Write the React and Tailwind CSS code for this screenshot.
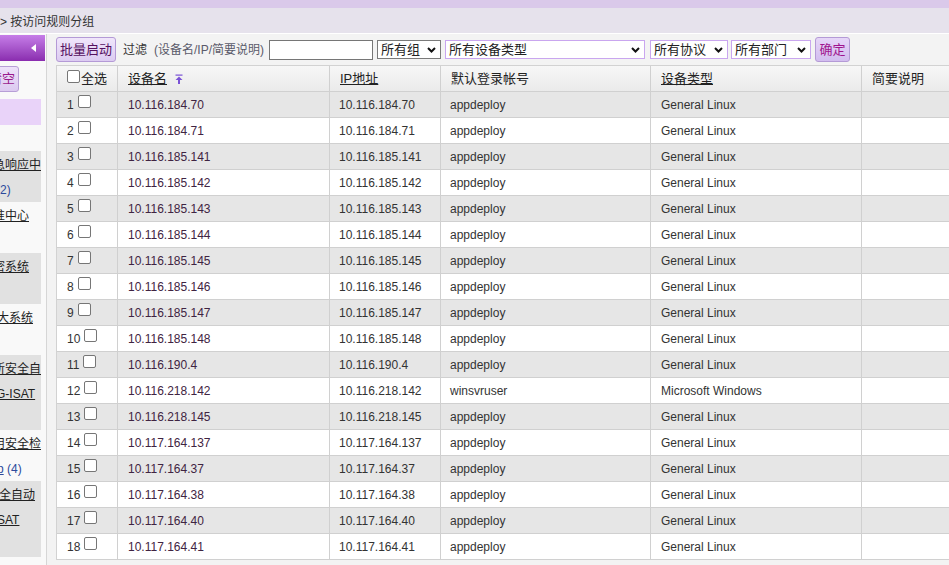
import React from "react";

const rows = [
  ["10.116.184.70", "appdeploy", "General Linux"],
  ["10.116.184.71", "appdeploy", "General Linux"],
  ["10.116.185.141", "appdeploy", "General Linux"],
  ["10.116.185.142", "appdeploy", "General Linux"],
  ["10.116.185.143", "appdeploy", "General Linux"],
  ["10.116.185.144", "appdeploy", "General Linux"],
  ["10.116.185.145", "appdeploy", "General Linux"],
  ["10.116.185.146", "appdeploy", "General Linux"],
  ["10.116.185.147", "appdeploy", "General Linux"],
  ["10.116.185.148", "appdeploy", "General Linux"],
  ["10.116.190.4", "appdeploy", "General Linux"],
  ["10.116.218.142", "winsvruser", "Microsoft Windows"],
  ["10.116.218.145", "appdeploy", "General Linux"],
  ["10.117.164.137", "appdeploy", "General Linux"],
  ["10.117.164.37", "appdeploy", "General Linux"],
  ["10.117.164.38", "appdeploy", "General Linux"],
  ["10.117.164.40", "appdeploy", "General Linux"],
  ["10.117.164.41", "appdeploy", "General Linux"],
];

function Chevron() {
  return (
    <svg width="9" height="6" viewBox="0 0 9 6" className="shrink-0">
      <path d="M1 1 L4.5 4.5 L8 1" fill="none" stroke="#111" strokeWidth="2" />
    </svg>
  );
}

function Sel({ w, purple, children }) {
  return (
    <div
      className={
        "h-[19px] flex items-center justify-between pl-[3px] pr-[4px] bg-white border text-[13px] text-[#222] " +
        w +
        " " +
        (purple ? "border-[#c9a6ef]" : "border-[#7a7a7a]")
      }
    >
      <span className="leading-[17px]">{children}</span>
      <Chevron />
    </div>
  );
}

function Box({ className = "" }) {
  return (
    <span
      className={
        "inline-block w-[13px] h-[13px] shrink-0 bg-white border border-[#767676] rounded-[2px] " +
        className
      }
    />
  );
}

function SideLine({ ml, children, plain }) {
  return (
    <div className="h-[25px] leading-[29px] whitespace-nowrap" style={{ marginLeft: ml }}>
      {plain ? children : <span className="underline">{children}</span>}
    </div>
  );
}

export default function App() {
  return (
    <div className="w-[949px] h-[565px] overflow-hidden bg-[#f3f3f3] text-[12px] text-[#333] font-['Liberation_Sans','Noto_Sans_CJK_SC',sans-serif]">
      <div className="h-[8px] bg-[#dac9ea]" />
      <div className="h-[26px] bg-[#e6e2ec] border-b border-white leading-[29px] text-[12px] text-[#333] whitespace-nowrap">
        &gt; 按访问规则分组
      </div>
      <div className="flex h-[531px]">
        {/* Sidebar */}
        <div className="w-[47px] shrink-0 bg-[#f9f9f9] border-r border-[#d6d6d6] overflow-hidden pt-[1px]">
          <div className="h-[26px] w-[45px] bg-gradient-to-b from-[#c67de8] to-[#8a2caf] flex items-center justify-end pr-[9px]">
            <svg width="5" height="8" viewBox="0 0 5 8">
              <path d="M5 0 L0 4 L5 8 Z" fill="#fff" />
            </svg>
          </div>
          <div className="mt-[5px] h-[26px] w-[19px] overflow-hidden">
            <div className="ml-[-21px] w-[40px] h-[26px] flex items-center justify-end pr-[3px] border border-[#b79fd6] rounded-[3px] bg-gradient-to-b from-[#eee2fa] to-[#dccaf0] text-[13px] text-[#9a1a8c]">
              清空
            </div>
          </div>
          <div className="mt-[7px] h-[26px] w-[41px] bg-[#e9d3f9]" />
          <div className="mt-[26px] w-[41px] overflow-hidden text-[12px] text-[#222]">
            <div className="h-[51px] bg-[#e1e1e1]">
              <SideLine ml="-7px">急响应中</SideLine>
              <SideLine ml="-4px" plain>
                <span className="text-[#2c4a9c]">(2)</span>
              </SideLine>
            </div>
            <div className="h-[51px]">
              <SideLine ml="-7px">准中心</SideLine>
            </div>
            <div className="h-[51px] bg-[#e1e1e1]">
              <SideLine ml="-7px">密系统</SideLine>
            </div>
            <div className="h-[51px]">
              <SideLine ml="-3px">大系统</SideLine>
            </div>
            <div className="h-[75px] bg-[#e1e1e1]">
              <SideLine ml="-7px">所安全自</SideLine>
              <SideLine ml="-4px">G-ISAT</SideLine>
            </div>
            <div className="h-[51px]">
              <SideLine ml="-7px">用安全检</SideLine>
              <SideLine ml="-3px" plain>
                <span className="underline text-[#2c4a9c]">p</span>
                <span className="text-[#2c4a9c]"> (4)</span>
              </SideLine>
            </div>
            <div className="h-[76px] bg-[#e1e1e1]">
              <SideLine ml="-1px">全自动</SideLine>
              <SideLine ml="-3px">SAT</SideLine>
            </div>
          </div>
        </div>

        {/* Main */}
        <div className="flex-1 pl-[9px] overflow-hidden">
          <div className="h-[31px] flex items-center whitespace-nowrap">
            <div className="w-[60px] h-[25px] flex items-center justify-center border border-[#b49ad6] rounded-[3px] bg-gradient-to-b from-[#f0e6fb] to-[#dccbf1] text-[13px] text-[#55105f]">
              批量启动
            </div>
            <span className="ml-[7px] text-[12px] text-[#333]">过滤</span>
            <span className="ml-[7px] text-[12px] text-[#5a5a6a]">(设备名/IP/简要说明)</span>
            <div className="ml-[5px] w-[104px] h-[20px] bg-white border border-[#767676]" />
            <div className="ml-[4px]">
              <Sel w="w-[64px]">所有组</Sel>
            </div>
            <div className="ml-[4px]">
              <Sel w="w-[200px]" purple>
                所有设备类型
              </Sel>
            </div>
            <div className="ml-[5px]">
              <Sel w="w-[78px]" purple>
                所有协议
              </Sel>
            </div>
            <div className="ml-[3px]">
              <Sel w="w-[80px]" purple>
                所有部门
              </Sel>
            </div>
            <div className="ml-[4px] w-[35px] h-[25px] flex items-center justify-center border border-[#b49ad6] rounded-[3px] bg-gradient-to-b from-[#e6d6f8] to-[#d2bdef] text-[13px] text-[#a0148e]">
              确定
            </div>
          </div>

          <div className="w-[926px] border-l border-t border-[#d2d2d2] text-[12px]">
            <div className="flex h-[26px] border-b border-[#d0d0d0] bg-gradient-to-b from-[#f7f7f7] to-[#eaeaea] text-[13px] text-[#222]">
              <div className="w-[61px] shrink-0 border-r border-[#d0d0d0] pl-[10px] flex items-center">
                <Box className="-translate-y-[2px]" />
                <span className="ml-[1px]">全选</span>
              </div>
              <div className="w-[212px] shrink-0 border-r border-[#d0d0d0] pl-[10px] flex items-center">
                <span className="underline">设备名</span>
                <svg width="8" height="10" viewBox="0 0 8 10" className="ml-[8px]">
                  <rect x="0.5" y="0.5" width="7" height="1.2" fill="#7a52d6" />
                  <path d="M4 2.5 L7.5 6 L5 6 L5 10 L3 10 L3 6 L0.5 6 Z" fill="#7a52d6" />
                </svg>
              </div>
              <div className="w-[111px] shrink-0 border-r border-[#d0d0d0] pl-[10px] flex items-center">
                <span className="underline">IP地址</span>
              </div>
              <div className="w-[210px] shrink-0 border-r border-[#d0d0d0] pl-[10px] flex items-center">
                默认登录帐号
              </div>
              <div className="w-[211px] shrink-0 border-r border-[#d0d0d0] pl-[10px] flex items-center">
                <span className="underline">设备类型</span>
              </div>
              <div className="w-[120px] shrink-0 pl-[10px] flex items-center">简要说明</div>
            </div>
            {rows.map((r, i) => (
              <div
                key={i}
                className={
                  "flex h-[26px] border-b border-[#d0d0d0] " +
                  (i % 2 === 0 ? "bg-[#e6e6e6]" : "bg-white")
                }
              >
                <div className="w-[61px] shrink-0 border-r border-[#d0d0d0] pl-[10px] flex items-center text-[#333]">
                  <span>{i + 1}</span>
                  <Box className="ml-[4px] -translate-y-[3px]" />
                </div>
                <div className="w-[212px] shrink-0 border-r border-[#d0d0d0] pl-[10px] flex items-center text-[#3f2442]">
                  {r[0]}
                </div>
                <div className="w-[111px] shrink-0 border-r border-[#d0d0d0] pl-[9px] flex items-center text-[#333]">
                  {r[0]}
                </div>
                <div className="w-[210px] shrink-0 border-r border-[#d0d0d0] pl-[9px] flex items-center text-[#333]">
                  {r[1]}
                </div>
                <div className="w-[211px] shrink-0 border-r border-[#d0d0d0] pl-[10px] flex items-center text-[#333]">
                  {r[2]}
                </div>
                <div className="w-[120px] shrink-0" />
              </div>
            ))}
          </div>
        </div>
      </div>
    </div>
  );
}
